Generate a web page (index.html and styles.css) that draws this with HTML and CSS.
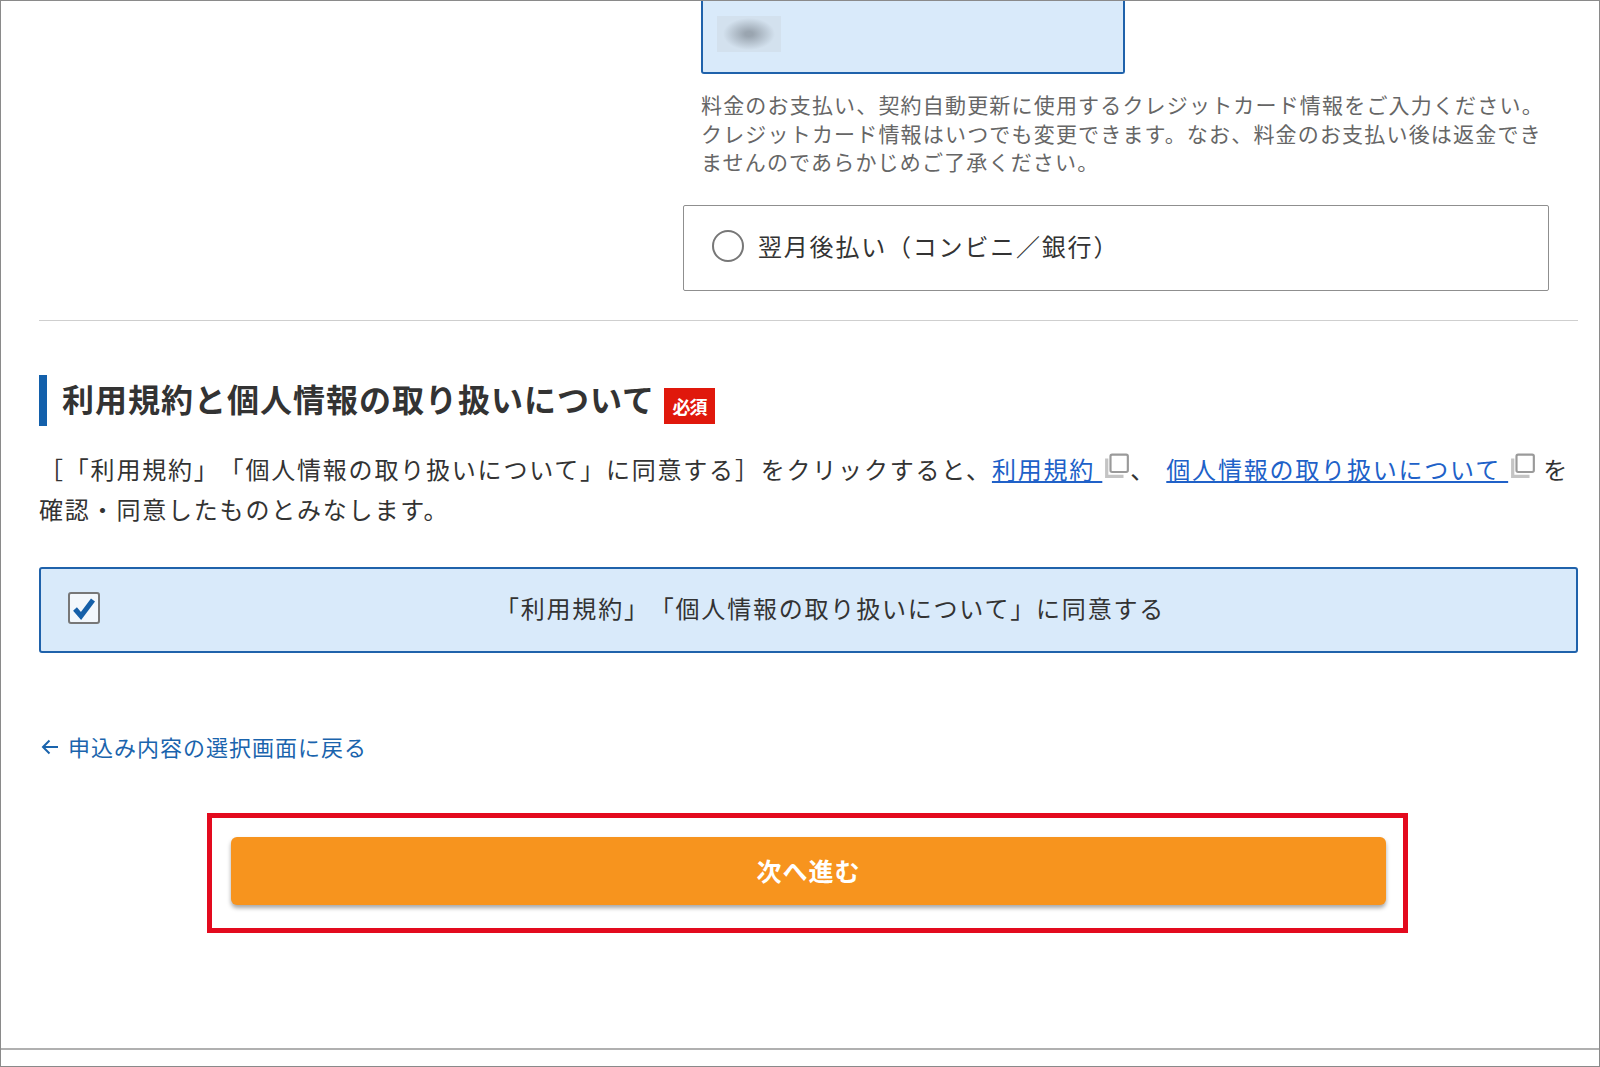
FILE: index.html
```html
<!DOCTYPE html>
<html lang="ja">
<head>
    <meta charset="UTF-8">
    <meta name="viewport" content="width=device-width, initial-scale=1.0">
    <title>お申し込み</title>
    <link rel="stylesheet" href="styles.css">
</head>
<body>
    <div class="frame">
        <div class="content">
            <!-- 支払い方法 -->
            <div class="payment">
                <div class="card-field"><div class="blur"></div></div>
                <p class="help">料金のお支払い、契約自動更新に使用するクレジットカード情報をご入力ください。<br>クレジットカード情報はいつでも変更できます。なお、料金のお支払い後は返金でき<br>ませんのであらかじめご了承ください。</p>
                <label class="radio-box">
                    <span class="radio"></span>
                    <span>翌月後払い（コンビニ／銀行）</span>
                </label>
            </div>
            <hr class="rule">

            <!-- 利用規約 -->
            <div class="heading">
                <h2>利用規約と個人情報の取り扱いについて</h2>
                <span class="required">必須</span>
            </div>
            <p class="terms">［「利用規約」「個人情報の取り扱いについて」に同意する］をクリックすると、<a href="#">利用規約 </a><svg class="ext" viewBox="0 0 24 24"><path d="M1 5v18h17v-3H4V5z" fill="#c4c4c4"/><rect x="6" y="1.500" width="16" height="16" rx="1.500" fill="#fff" stroke="#9a9a9a" stroke-width="2"/></svg>、 <a class="second" href="#">個人情報の取り扱いについて </a><svg class="ext" viewBox="0 0 24 24"><path d="M1 5v18h17v-3H4V5z" fill="#c4c4c4"/><rect x="6" y="1.500" width="16" height="16" rx="1.500" fill="#fff" stroke="#9a9a9a" stroke-width="2"/></svg> を<br>確認・同意したものとみなします。</p>

            <label class="agree">
                <span class="check">
                    <svg viewBox="0 0 32 32" width="32" height="32"><path d="M7 17l6 7L25 8" fill="none" stroke="#155fa8" stroke-width="5"/></svg>
                </span>
                <span class="agree-text">「利用規約」「個人情報の取り扱いについて」に同意する</span>
            </label>

            <a class="back" href="#">
                <svg class="back-arrow" viewBox="0 0 18 16" width="18" height="16"><path d="M17 8H2M8.500 1.500L2 8l6.500 6.500" fill="none" stroke="#1a64ad" stroke-width="2"/></svg>
                <span>申込み内容の選択画面に戻る</span>
            </a>

            <div class="highlight">
                <button class="next" type="button">次へ進む</button>
            </div>
        </div>
        <div class="footer"></div>
    </div>
</body>
</html>
```

FILE: styles.css
```css
*{
    margin: 0;
    padding: 0;
    box-sizing: border-box;
}
html,body{
    height: 100%;
}
body{
    overflow: hidden;
    background-color: #fff;
    color: #333;
    font-family: "Noto Sans CJK JP", "Noto Sans", sans-serif;
    text-spacing-trim: space-all;
}
.frame{
    height: 1067px;
    display: flex;
    flex-direction: column;
    border: 1px solid #8a8a8a;
    overflow: hidden;
}
.content{
    padding: 0 21px 0 38px;
}
.payment{
    margin-left: 644px;
}
.card-field{
    width: 424px;
    height: 73px;
    margin-left: 18px;
    padding-top: 15px;
    background-color: #d9eafa;
    border: 2px solid #1f62ab;
    border-top: 0;
    border-radius: 0 0 3px 3px;
}
.blur{
    width: 64px;
    height: 36px;
    margin-left: 14px;
    background: radial-gradient(ellipse 26px 16px at center, #9aa5b0 15%, #d3e1ee 100%);
}
.help{
    margin: 16px 0 0 18px;
    font-size: 21px;
    line-height: 28.6px;
    letter-spacing: 1.18px;
    color: #666;
    white-space: nowrap;
}
.radio-box{
    display: flex;
    align-items: center;
    gap: 14px;
    width: 866px;
    height: 86px;
    margin-top: 29px;
    padding: 0 0 4px 28px;
    border: 1px solid #8f8f8f;
    border-radius: 2px;
    font-size: 24px;
    letter-spacing: 1.8px;
}
.radio{
    width: 32px;
    height: 32px;
    border: 2px solid #777;
    border-radius: 50%;
    background-color: #fff;
}
.rule{
    height: 1px;
    margin-top: 29px;
    border: 0;
    background-color: #cfcfcf;
}
.heading{
    display: flex;
    align-items: center;
    height: 51px;
    margin-top: 54px;
    padding-left: 15px;
    border-left: 8px solid #1360ab;
}
.heading h2{
    padding-bottom: 4px;
    font-size: 32px;
    font-weight: 700;
    letter-spacing: 1px;
    line-height: 47px;
    white-space: nowrap;
}
.required{
    width: 51px;
    height: 36px;
    margin: 12px 0 0 9px;
    background-color: #e0180c;
    color: #fff;
    font-size: 18px;
    font-weight: 700;
    letter-spacing: -1px;
    line-height: 36px;
    text-align: center;
}
.terms{
    margin-top: 23px;
    font-size: 24px;
    line-height: 40px;
    letter-spacing: 1.8px;
    white-space: nowrap;
}
.terms a{
    color: #2061c8;
}
.terms .second{
    margin-left: 3px;
}
.ext{
    width: 26px;
    height: 26px;
    margin-left: 2px;
    vertical-align: 0;
}
.agree{
    display: flex;
    align-items: center;
    height: 86px;
    margin-top: 38px;
    padding: 0 0 4px 27px;
    background-color: #d9eafa;
    border: 2px solid #1f62ab;
    border-radius: 3px;
}
.check{
    flex: none;
    width: 32px;
    height: 32px;
    background-color: #f2f7fc;
    border: 2px solid #777;
    border-radius: 3px;
    overflow: hidden;
}
.check svg{
    display: block;
    margin: -2px;
}
.agree-text{
    flex: 1;
    padding-right: 16px;
    text-align: center;
    font-size: 24px;
    letter-spacing: 1.8px;
}
.back{
    display: flex;
    align-items: center;
    gap: 9px;
    height: 30px;
    margin: 78px 0 0 2px;
    color: #1a64ad;
    font-size: 22px;
    letter-spacing: 1px;
    text-decoration: none;
}
.back-arrow{
    margin-top: 3px;
}
.highlight{
    width: 1201px;
    height: 120px;
    margin: 52px 0 0 168px;
    padding: 19px 17px 23px 19px;
    border: 5px solid #e30a1e;
}
.next{
    display: block;
    width: 100%;
    height: 68px;
    padding-bottom: 2px;
    border: 0;
    border-radius: 6px;
    background-color: #f7941e;
    box-shadow: 0 3px 4px rgba(0, 0, 0, 0.35);
    color: #fff;
    font-family: inherit;
    font-size: 25px;
    font-weight: 700;
    letter-spacing: 1px;
}
.footer{
    height: 18px;
    margin-top: auto;
    border-top: 2px solid #b0b0b0;
}
```
